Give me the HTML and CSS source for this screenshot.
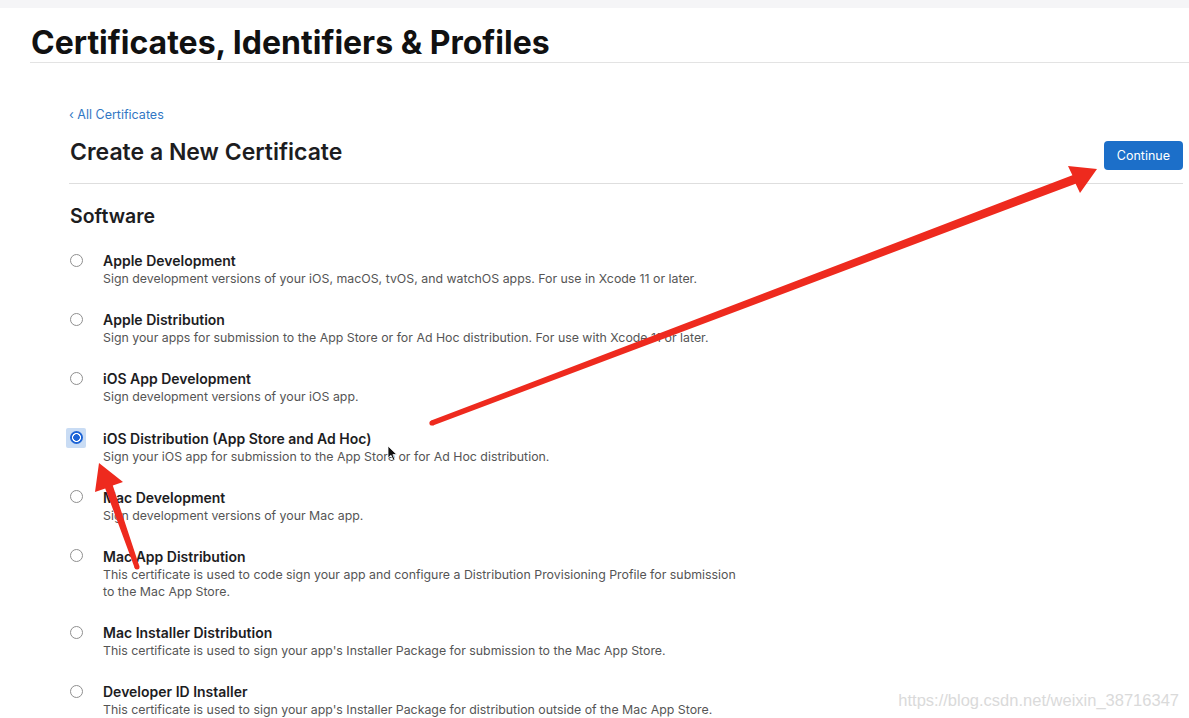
FILE: index.html
```html
<!DOCTYPE html>
<html lang="en">
<head>
<meta charset="utf-8">
<title>Certificates, Identifiers &amp; Profiles</title>
<link rel="stylesheet" href="styles.css">
</head>
<body>
<div class="topbar"></div>
<header class="page-header">
  <h1 class="page-title">Certificates, Identifiers &amp; Profiles</h1>
</header>
<main class="content">
  <a class="back-link" href="#">&lsaquo; All Certificates</a>
  <div class="heading-row">
    <h2 class="heading">Create a New Certificate</h2>
    <button class="btn-continue" type="button">Continue</button>
  </div>
  <h3 class="section-title">Software</h3>
  <ul class="options">
    <li class="option">
      <span class="radio-wrap"><span class="radio"></span></span>
      <div class="option-text">
        <div class="option-title">Apple Development</div>
        <div class="option-desc">Sign development versions of your iOS, macOS, tvOS, and watchOS apps. For use in Xcode 11 or later.</div>
      </div>
    </li>
    <li class="option">
      <span class="radio-wrap"><span class="radio"></span></span>
      <div class="option-text">
        <div class="option-title">Apple Distribution</div>
        <div class="option-desc">Sign your apps for submission to the App Store or for Ad Hoc distribution. For use with Xcode 11 or later.</div>
      </div>
    </li>
    <li class="option">
      <span class="radio-wrap"><span class="radio"></span></span>
      <div class="option-text">
        <div class="option-title">iOS App Development</div>
        <div class="option-desc">Sign development versions of your iOS app.</div>
      </div>
    </li>
    <li class="option">
      <span class="radio-wrap is-focused"><span class="radio is-checked"></span></span>
      <div class="option-text">
        <div class="option-title">iOS Distribution (App Store and Ad Hoc)</div>
        <div class="option-desc">Sign your iOS app for submission to the App Store or for Ad Hoc distribution.</div>
      </div>
    </li>
    <li class="option">
      <span class="radio-wrap"><span class="radio"></span></span>
      <div class="option-text">
        <div class="option-title">Mac Development</div>
        <div class="option-desc">Sign development versions of your Mac app.</div>
      </div>
    </li>
    <li class="option">
      <span class="radio-wrap"><span class="radio"></span></span>
      <div class="option-text">
        <div class="option-title">Mac App Distribution</div>
        <div class="option-desc">This certificate is used to code sign your app and configure a Distribution Provisioning Profile for submission to the Mac App Store.</div>
      </div>
    </li>
    <li class="option">
      <span class="radio-wrap"><span class="radio"></span></span>
      <div class="option-text">
        <div class="option-title">Mac Installer Distribution</div>
        <div class="option-desc">This certificate is used to sign your app's Installer Package for submission to the Mac App Store.</div>
      </div>
    </li>
    <li class="option">
      <span class="radio-wrap"><span class="radio"></span></span>
      <div class="option-text">
        <div class="option-title">Developer ID Installer</div>
        <div class="option-desc">This certificate is used to sign your app's Installer Package for distribution outside of the Mac App Store.</div>
      </div>
    </li>
  </ul>
</main>

<svg class="annotations" width="1189" height="718" viewBox="0 0 1189 718" aria-hidden="true">
  <circle cx="432" cy="423" r="2.6" fill="#ee2a1e"/>
  <polygon fill="#ee2a1e" points="431.1,420.6 1072.4,175.3 1068,166 1097,169 1080,193 1075.6,183.7 432.9,425.4"/>
  <circle cx="137" cy="567" r="2.5" fill="#ee2a1e"/>
  <polygon fill="#ee2a1e" points="134.7,567.9 105.2,488.4 95,492 99,463 123,482 112.8,485.6 139.3,566.1"/>
  <path d="M388 446 L388 458 L391 455.3 L393.2 460.4 L395 459.6 L392.9 454.6 L396.8 454.6 Z" fill="#111" stroke="#fff" stroke-width="0.8"/>
</svg>
<div class="watermark">https://blog.csdn.net/weixin_38716347</div>
</body>
</html>
```

FILE: styles.css
```css
html, body {
  margin: 0;
  padding: 0;
  background: #ffffff;
}
body {
  font-family: "Inter", "Liberation Sans", sans-serif;
  color: #1d1d1f;
  width: 1189px;
  height: 718px;
  overflow: hidden;
  position: relative;
}
.topbar {
  height: 8px;
  background: #f5f5f7;
}
.page-header {
  margin-left: 30px;
  padding-top: 16px;
  border-bottom: 1px solid #e3e3e3;
}
.page-title {
  margin: 0;
  padding-left: 1px;
  font-size: 32px;
  line-height: 38px;
  font-weight: 700;
  letter-spacing: 0;
  color: #111;
}
.content {
  padding: 0 6px 0 69px;
}
.back-link {
  display: inline-block;
  margin-top: 44px;
  font-size: 12.5px;
  line-height: 16px;
  color: #3277c4;
  text-decoration: none;
}
.heading-row {
  display: flex;
  align-items: center;
  justify-content: space-between;
  margin-top: 11px;
  padding-bottom: 13px;
  border-bottom: 1px solid #dedede;
}
.heading {
  margin: 0;
  padding-left: 1px;
  font-size: 23px;
  line-height: 30px;
  font-weight: 600;
  color: #1d1d1f;
}
.btn-continue {
  font-family: inherit;
  font-size: 12.5px;
  line-height: 16px;
  color: #fff;
  background: #1c6fc9;
  border: 0;
  border-radius: 4px;
  padding: 6px 13px;
  height: 29px;
  margin-top: 7px;
}
.section-title {
  margin: 19px 0 0 0;
  padding-left: 1px;
  font-size: 19.5px;
  line-height: 26px;
  font-weight: 600;
  color: #1d1d1f;
}
.options {
  list-style: none;
  margin: 22px 0 0 0;
  padding: 0;
}
.option {
  display: flex;
  margin-bottom: 23.2px;
}
.radio-wrap {
  width: 20px;
  height: 20px;
  margin: -1px 17px 0 -3px;
  display: flex;
  align-items: center;
  justify-content: center;
  flex: none;
}
.radio-wrap.is-focused {
  background: #c9dcf4;
  border-radius: 2px;
}
.radio {
  width: 11px;
  height: 11px;
  border: 1px solid #8f8f8f;
  border-radius: 50%;
  background: #fff;
  box-sizing: content-box;
}
.radio.is-checked {
  width: 13px;
  height: 13px;
  border: 0;
  background: radial-gradient(circle, #1d64d6 0 3px, #ffffff 3.6px 4.2px, #1d64d6 4.8px);
}
.option-text {
  max-width: 640px;
}
.option-title {
  font-size: 14px;
  line-height: 19px;
  font-weight: 600;
  color: #1d1d1f;
}
.option-desc {
  font-size: 12.35px;
  line-height: 17px;
  color: #555;
}
.annotations {
  position: absolute;
  left: 0;
  top: 0;
  pointer-events: none;
}
.watermark {
  position: absolute;
  right: 10px;
  top: 689px;
  font-family: "Liberation Sans", sans-serif;
  font-size: 16.5px;
  line-height: 22px;
  color: #dadada;
}
```
